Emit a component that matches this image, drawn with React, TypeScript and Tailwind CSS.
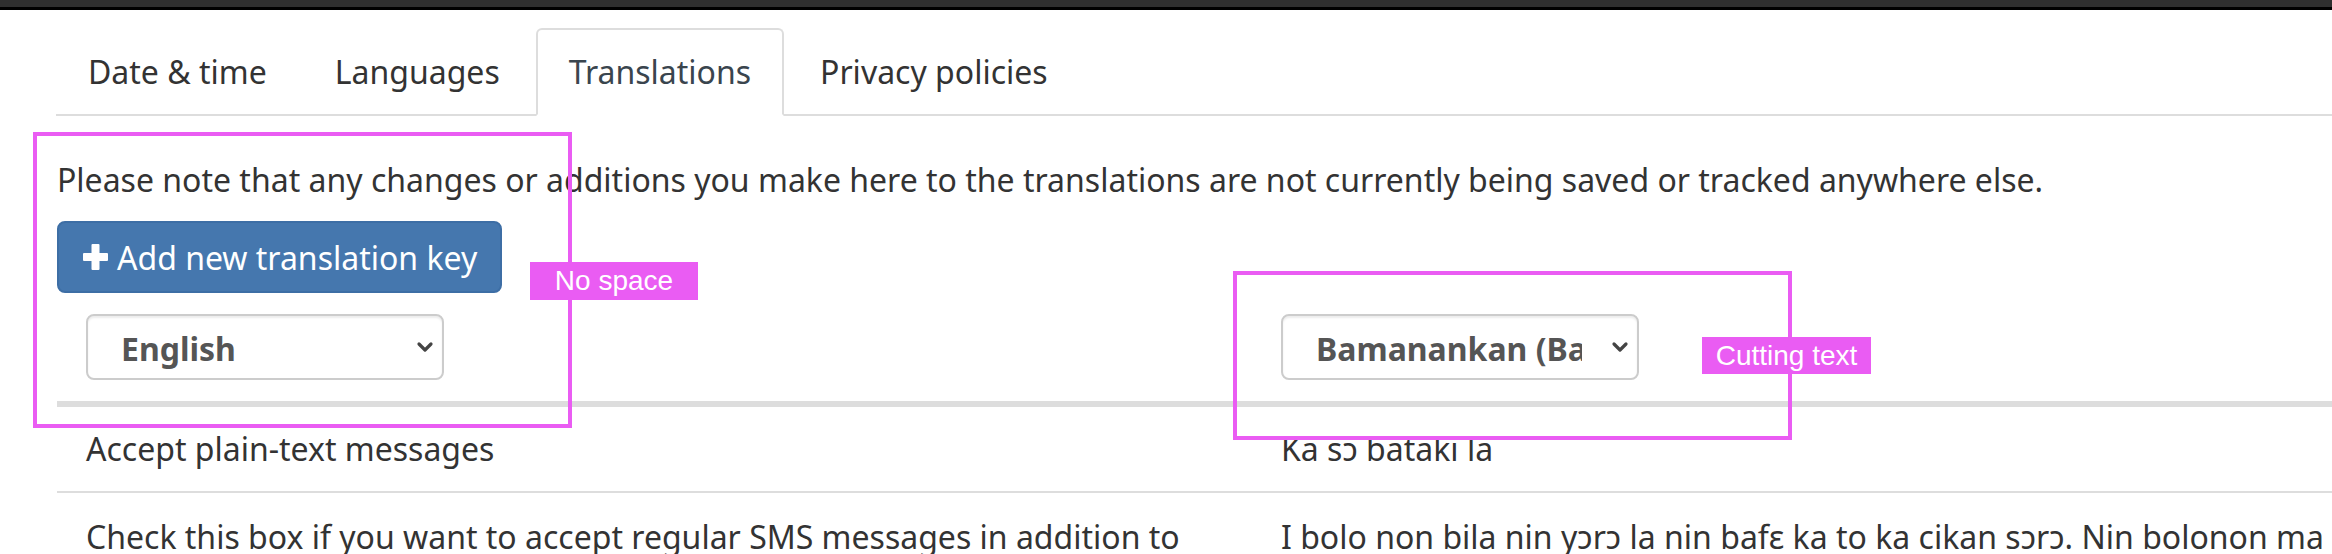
import React from "react";

function Chevron() {
  return (
    <svg width="18" height="12" viewBox="0 0 18 12" className="shrink-0">
      <polyline points="3,3 9,9 15,3" fill="none" stroke="#444" strokeWidth="3.2" strokeLinecap="round" strokeLinejoin="round" />
    </svg>
  );
}

function Select({ label }: { label: string }) {
  return (
    <div className="flex h-[66px] w-[358px] items-center rounded-[8px] border-2 border-[#ccc] bg-white pl-[33px] pr-[8px] shadow-[inset_0_2px_2px_rgba(0,0,0,0.075)]">
      <div className="mr-[29px] min-w-0 flex-1 overflow-hidden whitespace-nowrap pt-[4px] text-[32px] font-bold leading-[44px] text-[#555]">
        {label}
      </div>
      <Chevron />
    </div>
  );
}

export default function App() {
  const tabs = ["Date & time", "Languages", "Translations", "Privacy policies"];
  return (
    <div className="relative h-[554px] w-full overflow-hidden bg-white font-['Noto_Sans',sans-serif] text-[#333]">
      <div className="h-[7px] bg-[#2f2f2f]" />
      <div className="h-[3px] bg-black" />

      <div className="pl-[56px] pt-[18px]">
        <ul className="flex border-b-2 border-[#ddd]">
          {tabs.map((t) => {
            const active = t === "Translations";
            return (
              <li
                key={t}
                className={
                  active
                    ? "-mb-[2px] mr-[4px] flex h-[88px] items-center rounded-t-[6px] border-2 border-[#ddd] border-b-white bg-white px-[31px] text-[32px] text-[#3a454e]"
                    : "-mb-[2px] mr-[4px] flex h-[88px] items-center rounded-t-[6px] border-2 border-transparent px-[30px] text-[32px] text-[#333]"
                }
              >
                {t}
              </li>
            );
          })}
        </ul>
      </div>

      <div className="pl-[57px]">
        <p className="mt-[42px] whitespace-nowrap text-[32px] leading-[43px]">
          Please note that any changes or additions you make here to the translations are not currently being saved or tracked anywhere else.
        </p>
        <button className="mt-[20px] flex h-[72px] w-[445px] items-center gap-[9px] rounded-[8px] border-2 border-[#3d6ea5] bg-[#4577ae] pl-[24px] text-[32px] leading-[43px] text-white">
          <svg width="25" height="26" viewBox="0 0 25 26" className="shrink-0">
            <rect x="8.5" y="0" width="8" height="26" rx="1" fill="#fff" />
            <rect x="0" y="9" width="25" height="8" rx="1" fill="#fff" />
          </svg>
          <span className="whitespace-nowrap">Add new translation key</span>
        </button>

        <div className="w-[2390px]">
          <div className="flex border-b-[6px] border-[#ddd]">
            <div className="w-[1195px] shrink-0 px-[29px] py-[21px]">
              <Select label="English" />
            </div>
            <div className="w-[1195px] shrink-0 px-[29px] py-[21px]">
              <Select label="Bamanankan (Bambara)" />
            </div>
          </div>
          <div className="flex border-b-2 border-[#ddd]">
            <div className="w-[1195px] shrink-0 px-[29px] py-[21px] text-[32px] leading-[42px]">
              Accept plain-text messages
            </div>
            <div className="w-[1195px] shrink-0 px-[29px] py-[21px] text-[32px] leading-[42px]">
              Ka sɔ bataki la
            </div>
          </div>
          <div className="flex">
            <div className="w-[1195px] shrink-0 px-[29px] pt-[22px] text-[32px] leading-[43px]">
              Check this box if you want to accept regular SMS messages in addition to messages sent through the app.
            </div>
            <div className="w-[1195px] shrink-0 px-[29px] pt-[22px] text-[32px] leading-[43px]">
              I bolo non bila nin yɔrɔ la nin bafɛ ka to ka cikan sɔrɔ. Nin bolonon ma taga ka cikan sɔrɔ.
            </div>
          </div>
        </div>
      </div>

      {/* annotations */}
      <div className="pointer-events-none absolute left-[33px] top-[132px] h-[296px] w-[539px] border-4 border-[#ea5cf3]" />
      <div className="absolute left-[530px] top-[262px] flex h-[38px] w-[168px] items-center justify-center bg-[#ea5cf3] font-['Liberation_Sans',sans-serif] text-[28px] text-white">
        No space
      </div>
      <div className="pointer-events-none absolute left-[1233px] top-[271px] h-[169px] w-[559px] border-4 border-[#ea5cf3]" />
      <div className="absolute left-[1702px] top-[337px] flex h-[37px] w-[169px] items-center justify-center bg-[#ea5cf3] font-['Liberation_Sans',sans-serif] text-[28px] text-white">
        Cutting text
      </div>
    </div>
  );
}
